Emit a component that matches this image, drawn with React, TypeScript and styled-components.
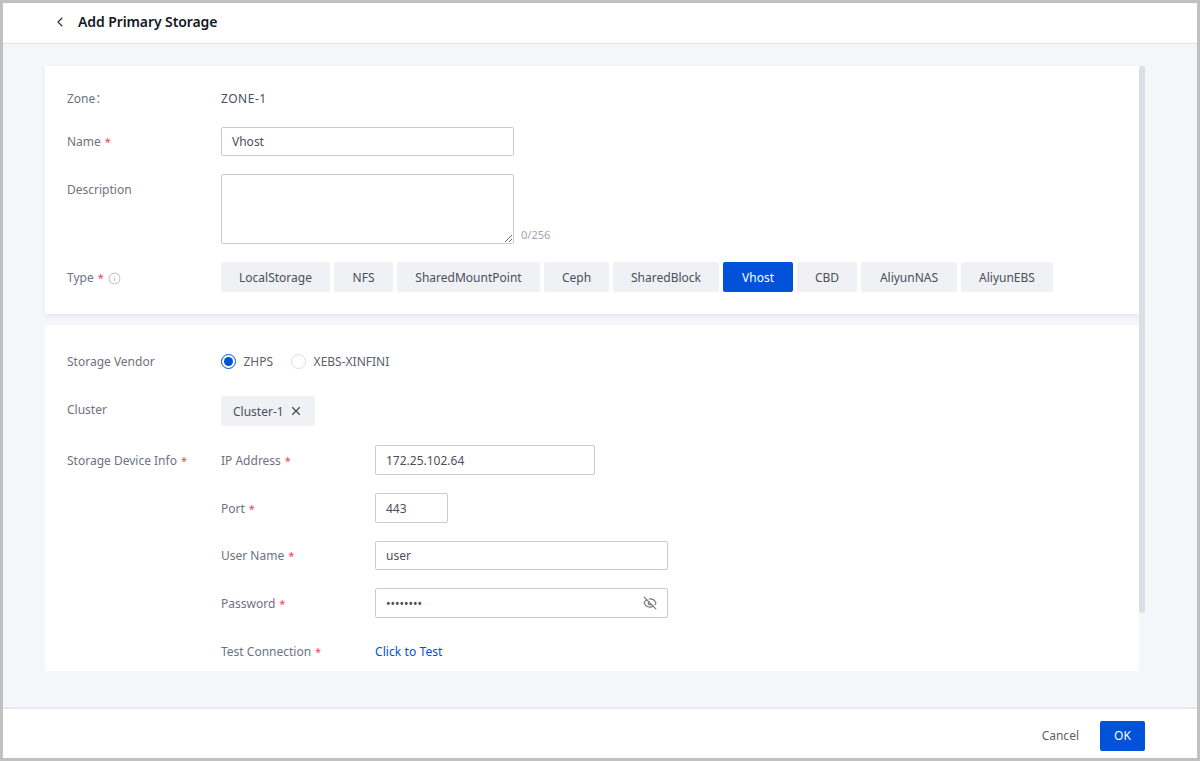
import React from "react";
import styled, { createGlobalStyle } from "styled-components";
import { ChevronLeft, EyeOff, Info, X } from "lucide-react";

const GlobalStyle = createGlobalStyle`
  html, body {
    margin: 0;
    padding: 0;
    background: #fff;
  }
  * {
    box-sizing: border-box;
  }
  body {
    font-family: "Noto Sans", "Noto Sans CJK SC", sans-serif;
    font-size: 12px;
    color: #4a4f5c;
  }
`;

const Page = styled.div`
  width: 1200px;
  height: 761px;
  display: flex;
  flex-direction: column;
  border: 3px solid #c0c0c0;
  overflow: hidden;
`;

const Header = styled.header`
  flex: 0 0 41px;
  display: flex;
  align-items: center;
  padding: 0 0 3px 49px;
  background: #fff;
  border-bottom: 1px solid #e3e5ea;
`;

const BackIcon = styled(ChevronLeft).attrs({ strokeWidth: 1.75 })`
  width: 16px;
  height: 16px;
  color: #333;
  margin-right: 10px;
`;

const Title = styled.h1`
  margin: 0;
  font-size: 14px;
  font-weight: 600;
  letter-spacing: -0.1px;
  color: #15181f;
`;

const Content = styled.main`
  flex: 1;
  display: flex;
  padding: 22px 0 0 42px;
  background: #f5f6fa;
`;

const Cards = styled.div`
  width: 1094px;
  display: flex;
  flex-direction: column;
  gap: 11px;
`;

const Card = styled.section<{ $flat?: boolean }>`
  height: ${props => (props.$flat ? "346px" : "248px")};
  padding: 21px 22px 0;
  background: #fff;
  box-shadow: ${props => (props.$flat ? "none" : "0 2px 4px rgba(40, 50, 80, 0.08)")};
`;

const Scrollbar = styled.div`
  width: 6px;
  height: 547px;
  border-radius: 3px;
  background: #dcdee3;
`;

const Row = styled.div<{ $gap?: number; $height?: number; $align?: string }>`
  display: flex;
  align-items: ${props => props.$align || "center"};
  min-height: ${props => props.$height || 30}px;
  margin-bottom: ${props => (props.$gap === undefined ? 18 : props.$gap)}px;
`;

const Label = styled.div<{ $width?: number; $top?: number }>`
  flex: 0 0 ${props => props.$width || 154}px;
  display: flex;
  align-items: center;
  padding-top: ${props => (props.$top === undefined ? 2 : props.$top)}px;
  color: #6d7280;
  line-height: 16px;
`;

const Star = styled.span`
  color: #f0424f;
  font-size: 11px;
  margin-left: 4px;
`;

const HintIcon = styled(Info)`
  width: 13px;
  height: 13px;
  margin-left: 4px;
  color: #c4c7ce;
`;

const Value = styled.span`
  color: #4a4f5c;
  letter-spacing: 0.5px;
`;

const Input = styled.input<{ $width: number; $height?: number }>`
  display: block;
  width: ${props => props.$width}px;
  height: ${props => props.$height || 30}px;
  padding: 0 10px;
  border: 1px solid #c9cbd0;
  border-radius: 2px;
  outline: none;
  font: inherit;
  color: #4a4f5c;
  background: #fff;
`;

const TextareaWrap = styled.div`
  display: flex;
  align-items: flex-end;
  gap: 7px;
`;

const Textarea = styled.textarea`
  display: block;
  width: 293px;
  height: 70px;
  border: 1px solid #c9cbd0;
  border-radius: 2px;
  outline: none;
  font: inherit;
  background: #fff;
`;

const Counter = styled.span`
  color: #a0a4ad;
  font-size: 11px;
  line-height: 16px;
  padding-bottom: 1px;
`;

const TypeList = styled.div`
  display: flex;
  gap: 4px;
`;

const TypeButton = styled.div<{ $active?: boolean; $width: number }>`
  width: ${props => props.$width}px;
  height: 30px;
  display: flex;
  align-items: center;
  justify-content: center;
  border-radius: 2px;
  background: ${props => (props.$active ? "#0052d9" : "#f0f1f5")};
  color: ${props => (props.$active ? "#fff" : "#4a4f5c")};
`;

const RadioGroup = styled.div`
  display: flex;
  gap: 18px;
`;

const RadioItem = styled.label`
  display: flex;
  align-items: center;
  gap: 7.5px;
  color: #5a5f6b;
`;

const RadioMark = styled.span<{ $checked?: boolean }>`
  width: 15px;
  height: 15px;
  border-radius: 50%;
  border: 1px solid ${props => (props.$checked ? "#0052d9" : "#dcdee3")};
  display: flex;
  align-items: center;
  justify-content: center;

  &::after {
    content: "";
    width: 9px;
    height: 9px;
    border-radius: 50%;
    background: ${props => (props.$checked ? "#0052d9" : "transparent")};
  }
`;

const Tag = styled.div`
  height: 30px;
  display: flex;
  align-items: center;
  gap: 5px;
  padding: 0 12px;
  border-radius: 2px;
  background: #f0f1f5;
  color: #4a4f5c;
`;

const TagClose = styled(X)`
  width: 14px;
  height: 14px;
  color: #444;
`;

const DeviceInfo = styled.div`
  flex: 1;
`;

const PasswordField = styled.div`
  position: relative;
  width: 293px;
`;

const EyeIcon = styled(EyeOff)`
  position: absolute;
  right: 11px;
  top: 8px;
  width: 14px;
  height: 14px;
  color: #777;
`;

const TestLink = styled.a`
  color: #0052d9;
  letter-spacing: 0.08px;
  cursor: pointer;
`;

const Footer = styled.footer`
  flex: 0 0 51px;
  display: flex;
  align-items: center;
  justify-content: flex-end;
  gap: 21px;
  padding: 4px 52px 0 0;
  background: #fff;
  border-top: 2px solid #e8e9ee;
`;

const CancelButton = styled.div`
  color: #5a5f6b;
`;

const OkButton = styled.div`
  width: 45px;
  height: 30px;
  display: flex;
  align-items: center;
  justify-content: center;
  border-radius: 2px;
  background: #0052d9;
  color: #fff;
`;

const types = [
  { name: "LocalStorage", width: 109 },
  { name: "NFS", width: 59 },
  { name: "SharedMountPoint", width: 143 },
  { name: "Ceph", width: 65 },
  { name: "SharedBlock", width: 106 },
  { name: "Vhost", width: 70 },
  { name: "CBD", width: 60 },
  { name: "AliyunNAS", width: 96 },
  { name: "AliyunEBS", width: 92 },
];

const App: React.FC = () => {
  return (
    <Page>
      <GlobalStyle />
      <Header>
        <BackIcon />
        <Title>Add Primary Storage</Title>
      </Header>

      <Content>
        <Cards>
          <Card>
            <Row $height={22}>
              <Label>Zone：</Label>
              <Value>ZONE-1</Value>
            </Row>
            <Row $height={29}>
              <Label $top={1}>
                Name<Star>*</Star>
              </Label>
              <Input $width={293} $height={29} value="Vhost" readOnly />
            </Row>
            <Row $align="flex-start">
              <Label $top={8}>Description</Label>
              <TextareaWrap>
                <Textarea readOnly />
                <Counter>0/256</Counter>
              </TextareaWrap>
            </Row>
            <Row>
              <Label>
                Type<Star>*</Star>
                <HintIcon />
              </Label>
              <TypeList>
                {types.map(type => (
                  <TypeButton
                    key={type.name}
                    $width={type.width}
                    $active={type.name === "Vhost"}
                  >
                    {type.name}
                  </TypeButton>
                ))}
              </TypeList>
            </Row>
          </Card>

          <Card $flat>
            <Row $gap={20}>
              <Label>Storage Vendor</Label>
              <RadioGroup>
                <RadioItem>
                  <RadioMark $checked />
                  ZHPS
                </RadioItem>
                <RadioItem>
                  <RadioMark />
                  XEBS-XINFINI
                </RadioItem>
              </RadioGroup>
            </Row>
            <Row $gap={19} $align="flex-start">
              <Label $top={6}>Cluster</Label>
              <Tag>
                Cluster-1
                <TagClose />
              </Tag>
            </Row>
            <Row $align="flex-start" $gap={0}>
              <Label $top={8}>
                Storage Device Info<Star>*</Star>
              </Label>
              <DeviceInfo>
                <Row>
                  <Label>
                    IP Address<Star>*</Star>
                  </Label>
                  <Input $width={220} value="172.25.102.64" readOnly />
                </Row>
                <Row>
                  <Label>
                    Port<Star>*</Star>
                  </Label>
                  <Input $width={73} value="443" readOnly />
                </Row>
                <Row $height={29}>
                  <Label $top={1}>
                    User Name<Star>*</Star>
                  </Label>
                  <Input $width={293} $height={29} value="user" readOnly />
                </Row>
                <Row>
                  <Label>
                    Password<Star>*</Star>
                  </Label>
                  <PasswordField>
                    <Input $width={293} type="password" value="12345678" readOnly />
                    <EyeIcon />
                  </PasswordField>
                </Row>
                <Row $gap={0}>
                  <Label>
                    Test Connection<Star>*</Star>
                  </Label>
                  <TestLink>Click to Test</TestLink>
                </Row>
              </DeviceInfo>
            </Row>
          </Card>
        </Cards>
        <Scrollbar />
      </Content>

      <Footer>
        <CancelButton>Cancel</CancelButton>
        <OkButton>OK</OkButton>
      </Footer>
    </Page>
  );
};

export default App;
